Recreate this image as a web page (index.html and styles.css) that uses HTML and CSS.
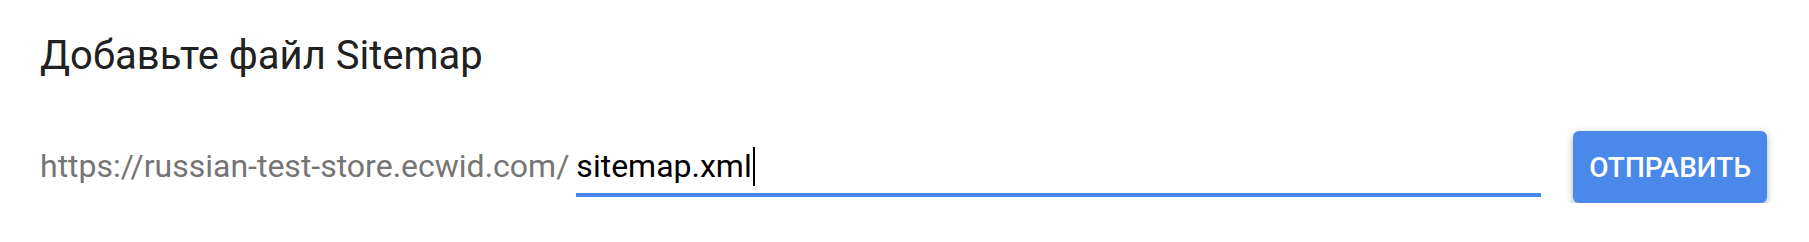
FILE: index.html
```html
<!DOCTYPE html>
<html lang="ru">
<head>
<meta charset="utf-8">
<title>Добавьте файл Sitemap</title>
<link rel="stylesheet" href="styles.css">
</head>
<body>
<div class="panel">
  <h2 class="title">Добавьте файл Sitemap</h2>
  <div class="row">
    <div class="field">
      <span class="prefix">https://russian-test-store.ecwid.com/</span>
      <div class="input"><span class="value">sitemap.xml</span><span class="caret"></span></div>
    </div>
    <button class="submit" type="button">Отправить</button>
  </div>
</div>
</body>
</html>
```
FILE: styles.css
```css
html, body {
  margin: 0;
  padding: 0;
  background: #ffffff;
}
body {
  font-family: Roboto, "Liberation Sans", Arial, sans-serif;
}
.panel {
  padding: 32px 42px 0 40px;
}
.title {
  margin: 0;
  font-size: 40px;
  line-height: 48px;
  font-weight: 400;
  color: #212121;
}
.row {
  display: flex;
  align-items: flex-start;
  margin-top: 51px;
}
.field {
  flex: 1;
  display: flex;
  align-items: flex-end;
  margin-top: 15px;
  margin-right: 32px;
}
.prefix {
  font-size: 32px;
  line-height: 40px;
  color: #757575;
  padding-bottom: 11px;
  white-space: nowrap;
}
.input {
  flex: 1;
  margin-left: 7px;
  font-size: 32px;
  line-height: 40px;
  color: #000000;
  padding-bottom: 7px;
  border-bottom: 4px solid #4a89e9;
  display: flex;
  align-items: center;
}
.caret {
  display: inline-block;
  width: 2px;
  height: 39px;
  background: #000000;
  margin-left: 1px;
}
.submit {
  height: 72px;
  padding: 0 16px;
  border: none;
  border-radius: 6px;
  background: #4a89e9;
  color: #ffffff;
  font-family: Roboto, "Liberation Sans", Arial, sans-serif;
  font-size: 28px;
  font-weight: 500;
  text-transform: uppercase;
  box-shadow: 0 4px 4px 0 rgba(0,0,0,0.14), 0 6px 2px -4px rgba(0,0,0,0.12), 0 2px 10px 0 rgba(0,0,0,0.2);
  cursor: pointer;
}
```
